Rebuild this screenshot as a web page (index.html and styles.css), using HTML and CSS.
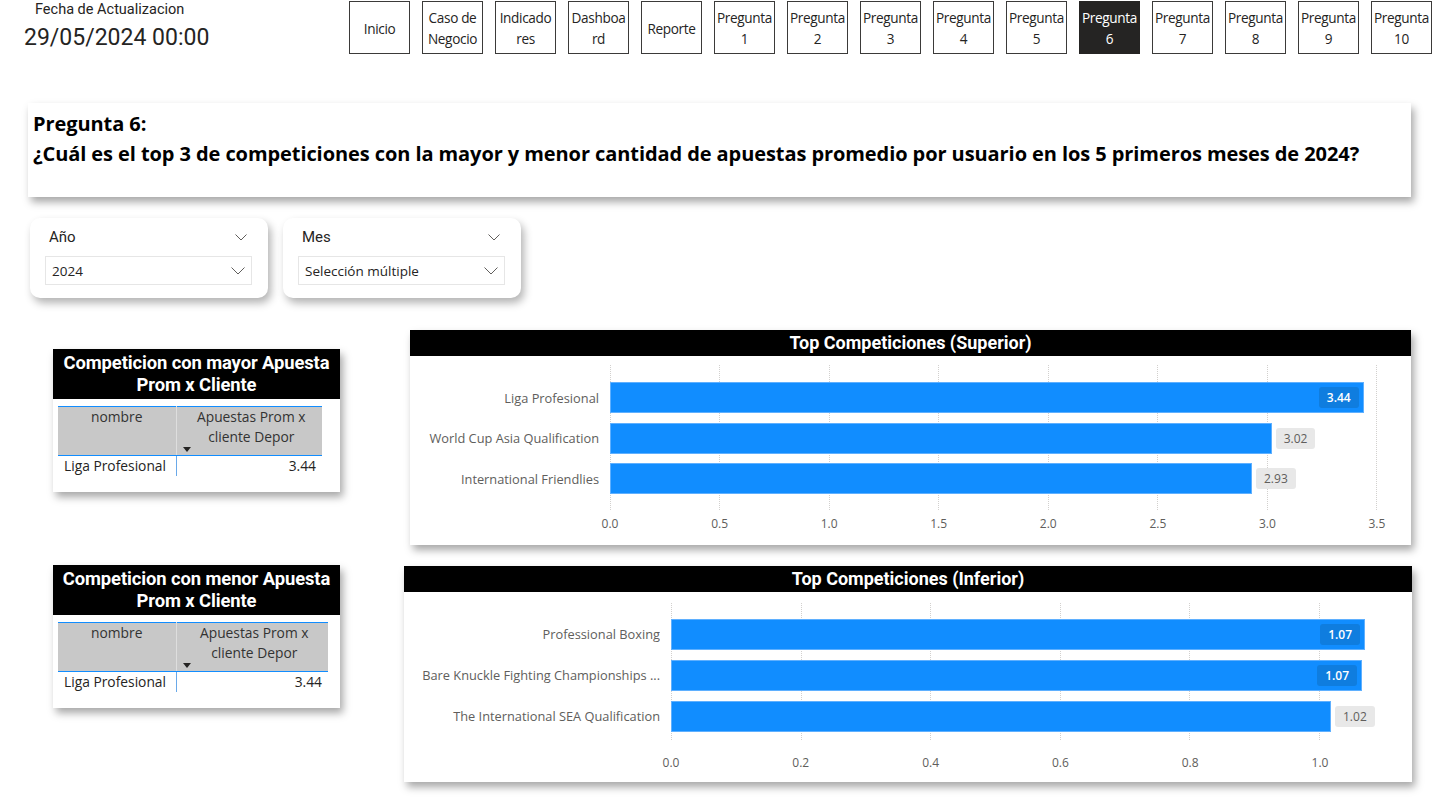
FILE: index.html
```html
<!DOCTYPE html>
<html lang="es">
<head>
<meta charset="utf-8">
<title>Pregunta 6</title>
<link rel="stylesheet" href="styles.css">
</head>
<body>
<div class="page">
  <header class="top">
    <div class="fecha">
      <div class="fecha-label">Fecha de Actualizacion</div>
      <div class="fecha-value">29/05/2024 00:00</div>
    </div>
    <nav class="nav">
      <div class="btn">Inicio</div>
      <div class="btn">Caso de Negocio</div>
      <div class="btn">Indicado<wbr>res</div>
      <div class="btn">Dashboa<wbr>rd</div>
      <div class="btn">Reporte</div>
      <div class="btn">Pregunta 1</div>
      <div class="btn">Pregunta 2</div>
      <div class="btn">Pregunta 3</div>
      <div class="btn">Pregunta 4</div>
      <div class="btn">Pregunta 5</div>
      <div class="btn active">Pregunta 6</div>
      <div class="btn">Pregunta 7</div>
      <div class="btn">Pregunta 8</div>
      <div class="btn">Pregunta 9</div>
      <div class="btn">Pregunta 10</div>
    </nav>
  </header>

  <section class="title-card">
    <p>Pregunta 6:</p>
    <p>¿Cuál es el top 3 de competiciones con la mayor y menor cantidad de apuestas promedio por usuario en los 5 primeros meses de 2024?</p>
  </section>

  <div class="slicers">
    <div class="slicer">
      <div class="slicer-head">
        <span>Año</span>
        <svg class="chev-sm" viewBox="0 0 12 7" width="12" height="7"><polyline points="0.5,0.5 6,6 11.5,0.5"/></svg>
      </div>
      <div class="dropdown">
        <span>2024</span>
        <svg class="chev" viewBox="0 0 14 8" width="14" height="8"><polyline points="0.5,0.5 7,7 13.5,0.5"/></svg>
      </div>
    </div>
    <div class="slicer">
      <div class="slicer-head">
        <span>Mes</span>
        <svg class="chev-sm" viewBox="0 0 12 7" width="12" height="7"><polyline points="0.5,0.5 6,6 11.5,0.5"/></svg>
      </div>
      <div class="dropdown">
        <span>Selección múltiple</span>
        <svg class="chev" viewBox="0 0 14 8" width="14" height="8"><polyline points="0.5,0.5 7,7 13.5,0.5"/></svg>
      </div>
    </div>
  </div>

  <div class="row row-top">
    <div class="table-card">
      <div class="card-title">Competicion con mayor Apuesta<br>Prom x Cliente</div>
      <table class="tbl tbl-a">
        <thead>
          <tr>
            <th class="c1">nombre</th>
            <th class="c2">Apuestas Prom x cliente Depor<span class="sort"></span></th>
          </tr>
        </thead>
        <tbody>
          <tr><td class="c1">Liga Profesional</td><td class="c2">3.44</td></tr>
        </tbody>
      </table>
    </div>

    <div class="chart chart-sup">
      <div class="chart-title">Top Competiciones (Superior)</div>
      <div class="chart-body">
        <div class="plot">
          <div class="gridlines"><i></i><i></i><i></i><i></i><i></i><i></i><i></i><i></i></div>
          <div class="cat r1">Liga Profesional</div>
          <div class="track r1"><div class="bar" style="width:753.7px"><span class="dl in">3.44</span></div></div>
          <div class="cat r2">World Cup Asia Qualification</div>
          <div class="track r2"><div class="bar" style="width:661.7px"></div><span class="dl out">3.02</span></div>
          <div class="cat r3">International Friendlies</div>
          <div class="track r3"><div class="bar" style="width:642px"></div><span class="dl out">2.93</span></div>
        </div>
        <div class="axis">
          <div class="axis-spacer"></div>
          <div class="ticks"><span>0.0</span><span>0.5</span><span>1.0</span><span>1.5</span><span>2.0</span><span>2.5</span><span>3.0</span><span>3.5</span></div>
        </div>
      </div>
    </div>
  </div>

  <div class="row row-bottom">
    <div class="table-card">
      <div class="card-title">Competicion con menor Apuesta<br>Prom x Cliente</div>
      <table class="tbl tbl-b">
        <thead>
          <tr>
            <th class="c1">nombre</th>
            <th class="c2">Apuestas Prom x cliente Depor<span class="sort"></span></th>
          </tr>
        </thead>
        <tbody>
          <tr><td class="c1">Liga Profesional</td><td class="c2">3.44</td></tr>
        </tbody>
      </table>
    </div>

    <div class="chart chart-inf">
      <div class="chart-title">Top Competiciones (Inferior)</div>
      <div class="chart-body">
        <div class="plot">
          <div class="gridlines"><i></i><i></i><i></i><i></i><i></i><i></i></div>
          <div class="cat r1">Professional Boxing</div>
          <div class="track r1"><div class="bar" style="width:694px"><span class="dl in">1.07</span></div></div>
          <div class="cat r2">Bare Knuckle Fighting Championships ...</div>
          <div class="track r2"><div class="bar" style="width:691px"><span class="dl in">1.07</span></div></div>
          <div class="cat r3">The International SEA Qualification</div>
          <div class="track r3"><div class="bar" style="width:660px"></div><span class="dl out">1.02</span></div>
        </div>
        <div class="axis">
          <div class="axis-spacer"></div>
          <div class="ticks"><span>0.0</span><span>0.2</span><span>0.4</span><span>0.6</span><span>0.8</span><span>1.0</span></div>
        </div>
      </div>
    </div>
  </div>
</div>
</body>
</html>
```

FILE: styles.css
```css
* { box-sizing: border-box; }

html, body {
  margin: 0;
  padding: 0;
  background: #ffffff;
}

body {
  width: 1437px;
  height: 808px;
  overflow: hidden;
  font-family: "Open Sans", "Noto Sans", sans-serif;
  color: #252423;
}

/* ---------- header ---------- */
.top {
  display: flex;
  height: 55px;
}

.fecha {
  width: 349px;
  flex: none;
}

.fecha-label {
  font-family: Roboto, "DejaVu Sans", sans-serif;
  font-size: 14.5px;
  line-height: 20px;
  padding-left: 35px;
  color: #252423;
}

.fecha-value {
  font-family: Roboto, "DejaVu Sans", sans-serif;
  font-size: 23px;
  line-height: 28px;
  margin-top: 4px;
  padding-left: 24px;
  color: #252423;
}

.nav {
  display: flex;
  gap: 12px;
}

.btn {
  width: 61px;
  height: 53px;
  margin-top: 1px;
  border: 1px solid #3b3a39;
  background: #ffffff;
  display: flex;
  align-items: center;
  justify-content: center;
  text-align: center;
  font-size: 13.6px;
  line-height: 21px;
  letter-spacing: -0.35px;
  color: #252423;
  padding: 1px 0 0;
  overflow: hidden;
}

.btn.active {
  background: #252423;
  border-color: #252423;
  color: #ffffff;
}

/* ---------- title card ---------- */
.title-card {
  margin: 48px 0 0 28px;
  width: 1383px;
  height: 94px;
  background: #ffffff;
  box-shadow: 3px 5px 8px rgba(0, 0, 0, 0.35);
  padding: 6px 0 0 5px;
}

.title-card p {
  margin: 0;
  font-weight: 700;
  font-size: 20px;
  line-height: 30px;
  letter-spacing: -0.08px;
  color: #000000;
  white-space: nowrap;
}

/* ---------- slicers ---------- */
.slicers {
  display: flex;
  gap: 15px;
  margin: 21px 0 0 30px;
}

.slicer {
  width: 238px;
  height: 80px;
  background: #ffffff;
  border-radius: 10px;
  box-shadow: 3px 5px 8px rgba(0, 0, 0, 0.3);
  padding: 0 16px 0 15px;
}

.slicer-head {
  height: 38px;
  display: flex;
  align-items: center;
  justify-content: space-between;
  padding: 0 5px 0 4px;
  font-family: Roboto, "DejaVu Sans", sans-serif;
  font-size: 15px;
  color: #252423;
}

.dropdown {
  height: 29px;
  border: 1px solid #e6e6e6;
  display: flex;
  align-items: center;
  justify-content: space-between;
  padding: 0 6px 0 6px;
  font-size: 13.5px;
  color: #252423;
}

.chev-sm polyline,
.chev polyline {
  fill: none;
  stroke: #605e5c;
  stroke-width: 1;
}

/* ---------- rows ---------- */
.row {
  display: flex;
  align-items: flex-start;
}

.row-top {
  margin-top: 32px;
}

.row-bottom {
  margin-top: 20px;
}

.table-card {
  margin-left: 53px;
  width: 287px;
  height: 143px;
  background: #ffffff;
  box-shadow: 3px 5px 8px rgba(0, 0, 0, 0.35);
  flex: none;
}

.row-top .table-card {
  margin-top: 19px;
}

.card-title {
  height: 50px;
  background: #000000;
  color: #ffffff;
  font-family: Roboto, "DejaVu Sans", sans-serif;
  font-weight: 700;
  font-size: 18.4px;
  line-height: 22px;
  padding-top: 3px;
  text-align: center;
  letter-spacing: -0.1px;
  white-space: nowrap;
}

.tbl {
  margin: 7px 0 0 5px;
  border-collapse: collapse;
  font-size: 13.8px;
  color: #252423;
}

.tbl-a { width: 264px; }
.tbl-b { width: 270px; }

.tbl th {
  background: #c8c8c8;
  font-weight: 400;
  height: 49px;
  vertical-align: top;
  text-align: center;
  line-height: 20px;
  padding: 0 4px 0;
  border-top: 1px solid #118dff;
  border-bottom: 1px solid #118dff;
  color: #333333;
  position: relative;
}

.tbl th.c1 {
  width: 118px;
  border-right: 1px solid #dedede;
}

.tbl th.c2 {
  padding: 0 10px 0 14px;
}

.sort {
  position: absolute;
  left: 6px;
  bottom: 3px;
  width: 0;
  height: 0;
  border-left: 4px solid transparent;
  border-right: 4px solid transparent;
  border-top: 5px solid #252423;
}

.tbl td {
  height: 20px;
  line-height: 20px;
  padding: 0 6px;
}

.tbl td.c1 {
  border-right: 1px solid #6aa9e9;
  white-space: nowrap;
}

.tbl td.c2 {
  text-align: right;
}

/* ---------- charts ---------- */
.chart {
  background: #ffffff;
  box-shadow: 3px 5px 8px rgba(0, 0, 0, 0.35);
  flex: none;
}

.chart-sup {
  margin-left: 70px;
  width: 1001px;
  height: 215px;
}

.chart-inf {
  margin-left: 64px;
  margin-top: 1px;
  width: 1008px;
  height: 216px;
}

.chart-title {
  height: 26px;
  background: #000000;
  color: #ffffff;
  font-family: Roboto, "DejaVu Sans", sans-serif;
  font-weight: 700;
  font-size: 18px;
  line-height: 26px;
  text-align: center;
}

.plot {
  display: grid;
  column-gap: 11px;
  align-items: center;
}

.chart-sup .chart-body { padding-top: 9px; }
.chart-sup .plot {
  grid-template-columns: 189px 767px;
  grid-template-rows: 17px 31px 9.7px 31px 9.7px 31px 16px;
}

.chart-inf .chart-body { padding-top: 11px; }
.chart-inf .plot {
  grid-template-columns: 256px 649px;
  grid-template-rows: 15.5px 31px 10px 31px 10px 31px 8.5px;
}

.r1 { grid-row: 2; }
.r2 { grid-row: 4; }
.r3 { grid-row: 6; }

.gridlines {
  grid-column: 2;
  grid-row: 1 / 8;
  align-self: stretch;
  display: flex;
  justify-content: space-between;
}

.gridlines i {
  display: block;
  width: 0;
  border-left: 1px dotted #d2d0ce;
}

.cat {
  grid-column: 1;
  text-align: right;
  font-size: 12.8px;
  color: #605e5c;
  white-space: nowrap;
  overflow: hidden;
}

.track {
  grid-column: 2;
  height: 31px;
  display: flex;
  align-items: center;
  position: relative;
  z-index: 1;
}

.bar {
  height: 31px;
  background: #118dff;
  border: 1px solid #5fb0ff;
  display: flex;
  align-items: center;
  justify-content: flex-end;
  padding-right: 4px;
  flex: none;
}

.dl {
  font-size: 12px;
  line-height: 21px;
  height: 21px;
  padding: 0 8px;
  border-radius: 3px;
}

.dl.in {
  background: #0f7ddf;
  color: #ffffff;
  font-weight: 600;
}

.dl.out {
  background: #e8e8e8;
  color: #605e5c;
  margin-left: 4px;
}

.axis {
  display: flex;
}

.chart-sup .axis { margin-top: 6px; }
.chart-inf .axis { margin-top: 14.5px; }

.chart-sup .axis-spacer { width: 185px; flex: none; }
.chart-inf .axis-spacer { width: 252px; flex: none; }

.ticks {
  display: flex;
  justify-content: space-between;
  font-size: 12px;
  line-height: 16px;
  color: #605e5c;
}

.chart-sup .ticks { width: 797px; }
.chart-inf .ticks { width: 679px; }

.ticks span {
  width: 30px;
  text-align: center;
}
```
